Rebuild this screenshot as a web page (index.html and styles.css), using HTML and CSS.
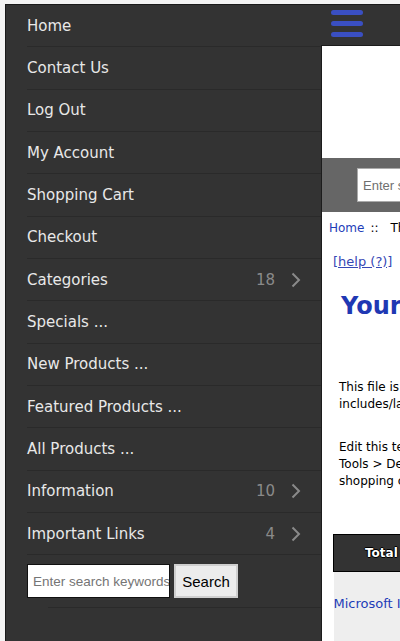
FILE: index.html
```html
<!DOCTYPE html>
<html lang="en">
<head>
<meta charset="utf-8">
<title>Menu</title>
<link rel="stylesheet" href="styles.css">
</head>
<body>
<div class="frame">
  <nav class="menu">
    <ul class="menu-list">
      <li class="item"><span class="label">Home</span></li>
      <li class="item"><span class="label">Contact Us</span></li>
      <li class="item"><span class="label">Log Out</span></li>
      <li class="item"><span class="label">My Account</span></li>
      <li class="item"><span class="label">Shopping Cart</span></li>
      <li class="item"><span class="label">Checkout</span></li>
      <li class="item"><span class="label">Categories</span><span class="count">18</span><svg class="chev" width="10" height="16" viewBox="0 0 10 16"><path d="M1.5 1.5 L8 8 L1.5 14.5" fill="none" stroke="#8a8a8a" stroke-width="2"/></svg></li>
      <li class="item"><span class="label">Specials ...</span></li>
      <li class="item"><span class="label">New Products ...</span></li>
      <li class="item"><span class="label">Featured Products ...</span></li>
      <li class="item"><span class="label">All Products ...</span></li>
      <li class="item"><span class="label">Information</span><span class="count">10</span><svg class="chev" width="10" height="16" viewBox="0 0 10 16"><path d="M1.5 1.5 L8 8 L1.5 14.5" fill="none" stroke="#8a8a8a" stroke-width="2"/></svg></li>
      <li class="item"><span class="label">Important Links</span><span class="count">4</span><svg class="chev" width="10" height="16" viewBox="0 0 10 16"><path d="M1.5 1.5 L8 8 L1.5 14.5" fill="none" stroke="#8a8a8a" stroke-width="2"/></svg></li>
      <li class="search-item">
        <form class="search-form">
          <input class="search-input" type="text" placeholder="Enter search keywords">
          <button class="search-btn" type="button">Search</button>
        </form>
      </li>
    </ul>
  </nav>
  <div class="page">
    <header class="page-header">
      <div class="burger"><span></span><span></span><span></span></div>
    </header>
    <main class="page-body">
      <div class="logo-area"></div>
      <div class="search-band">
        <input class="band-input" type="text" placeholder="Enter search keywords here">
      </div>
      <div class="crumbs"><a class="crumb-link">Home</a><span class="sep">::</span>The Shop</div>
      <div class="help"><a class="help-link">[help (?)]</a></div>
      <h1 class="title">Your Shop Name Here</h1>
      <p class="para">This file is located in<br>includes/languages/english/html_includes/</p>
      <p class="para para2">Edit this text using the Define Pages Editor, located under<br>Tools &gt; Define Pages Editor in the Admin of your<br>shopping cart.</p>
      <table class="cart">
        <tr><th class="cart-th">Total Items</th></tr>
        <tr><td class="cart-td"><a class="prod-link">Microsoft IntelliMouse</a></td></tr>
      </table>
    </main>
  </div>
</div>
</body>
</html>
```
FILE: styles.css
```css
html, body {
  margin: 0;
  padding: 0;
  height: 100%;
  overflow: hidden;
}
body {
  background: #f4f4f4;
  font-family: "DejaVu Sans", Verdana, sans-serif;
}
.frame {
  margin: 4px 0 0 5px;
  border: 1px solid #1a1a1a;
  border-right: none;
  border-bottom: none;
  background: #333333;
  height: 700px;
  display: flex;
  overflow: hidden;
}
.menu {
  flex: none;
  width: 315px;
}
.menu-list {
  list-style: none;
  margin: 0;
  padding: 0;
}
.item {
  display: flex;
  align-items: center;
  height: 41.33px;
  margin-left: 21px;
  border-bottom: 1px solid #2a2a2a;
  color: #e8e8e8;
  font-size: 15px;
}
.label {
  flex: 1;
}
.count {
  color: #8a8a8a;
  font-size: 15px;
  margin-right: 16px;
}
.chev {
  margin-right: 20px;
  display: block;
}
.search-item {
  padding: 9px 0 9px 21px;
}
.search-item::after {
  content: "";
  display: block;
  height: 1px;
  background: #2a2a2a;
  margin-left: 21px;
  margin-top: 9px;
}
.search-form {
  display: flex;
  gap: 4px;
}
.search-input {
  box-sizing: border-box;
  width: 143px;
  height: 34px;
  border: 1px solid #111;
  background: #fff;
  font-family: "Liberation Sans", Arial, sans-serif;
  font-size: 13.5px;
  padding: 0 0 0 5px;
  margin: 0;
}
.search-input::placeholder {
  color: #757575;
}
.search-btn {
  box-sizing: border-box;
  width: 64px;
  height: 34px;
  margin: 0;
  border: 2px solid #cfcfcf;
  background: #ececec;
  color: #000;
  font-family: "Liberation Sans", Arial, sans-serif;
  font-size: 15px;
  padding: 0;
}
.page {
  flex: none;
  width: 700px;
  display: flex;
  flex-direction: column;
}
.page-header {
  height: 40px;
  padding-left: 10px;
}
.burger {
  display: flex;
  flex-direction: column;
  gap: 6px;
  padding-top: 5px;
  width: 32px;
}
.burger span {
  display: block;
  height: 5px;
  border-radius: 3px;
  background: #3a4fc2;
}
.page-body {
  flex: 1;
  background: #fff;
  border-left: 1px solid #1c1c1c;
  border-top: 1px solid #1c1c1c;
  font-size: 12px;
  color: #000;
}
.logo-area {
  height: 112px;
}
.search-band {
  height: 54px;
  box-sizing: border-box;
  background: #666666;
  padding: 10px 0 0 35px;
}
.band-input {
  box-sizing: border-box;
  width: 300px;
  height: 34px;
  border: 1px solid #aaa;
  background: #fff;
  font-family: "Liberation Sans", Arial, sans-serif;
  font-size: 13px;
  padding: 0 5px;
  margin: 0;
}
.band-input::placeholder {
  color: #6f6f6f;
}
.crumbs {
  padding: 8px 7px 9px;
  line-height: 17px;
}
.sep {
  margin: 0 12px 0 6px;
}
.crumb-link {
  color: #1d3cb8;
}
.help {
  margin-top: 7px;
  padding-left: 11px;
  line-height: 17px;
  font-size: 13px;
}
.help-link {
  color: #3547b5;
  text-decoration: underline;
}
.title {
  margin: 22px 0 0 0;
  padding-left: 19px;
  font-size: 24px;
  line-height: 29px;
  font-weight: bold;
  color: #1f38b3;
}
.para {
  margin: 58px 0 0 0;
  padding-left: 17px;
  line-height: 17px;
  font-size: 12px;
}
.para2 {
  margin-top: 26px;
}
.cart {
  margin: 44px 0 0 11px;
  border-collapse: collapse;
  width: 500px;
}
.cart-th {
  height: 37px;
  box-sizing: border-box;
  background: #333;
  border: 1px solid #000;
  color: #fff;
  font-weight: bold;
  font-size: 12px;
  text-align: left;
  padding: 0 0 0 31px;
  text-shadow: 1px 0 0 #000, -1px 0 0 #000, 0 1px 0 #000, 0 -1px 0 #000;
}
.cart-td {
  background: #eeeeee;
  height: 80px;
  vertical-align: top;
  padding: 24px 0 0 0;
  font-size: 13px;
}
.prod-link {
  color: #1d3cb8;
}
```
